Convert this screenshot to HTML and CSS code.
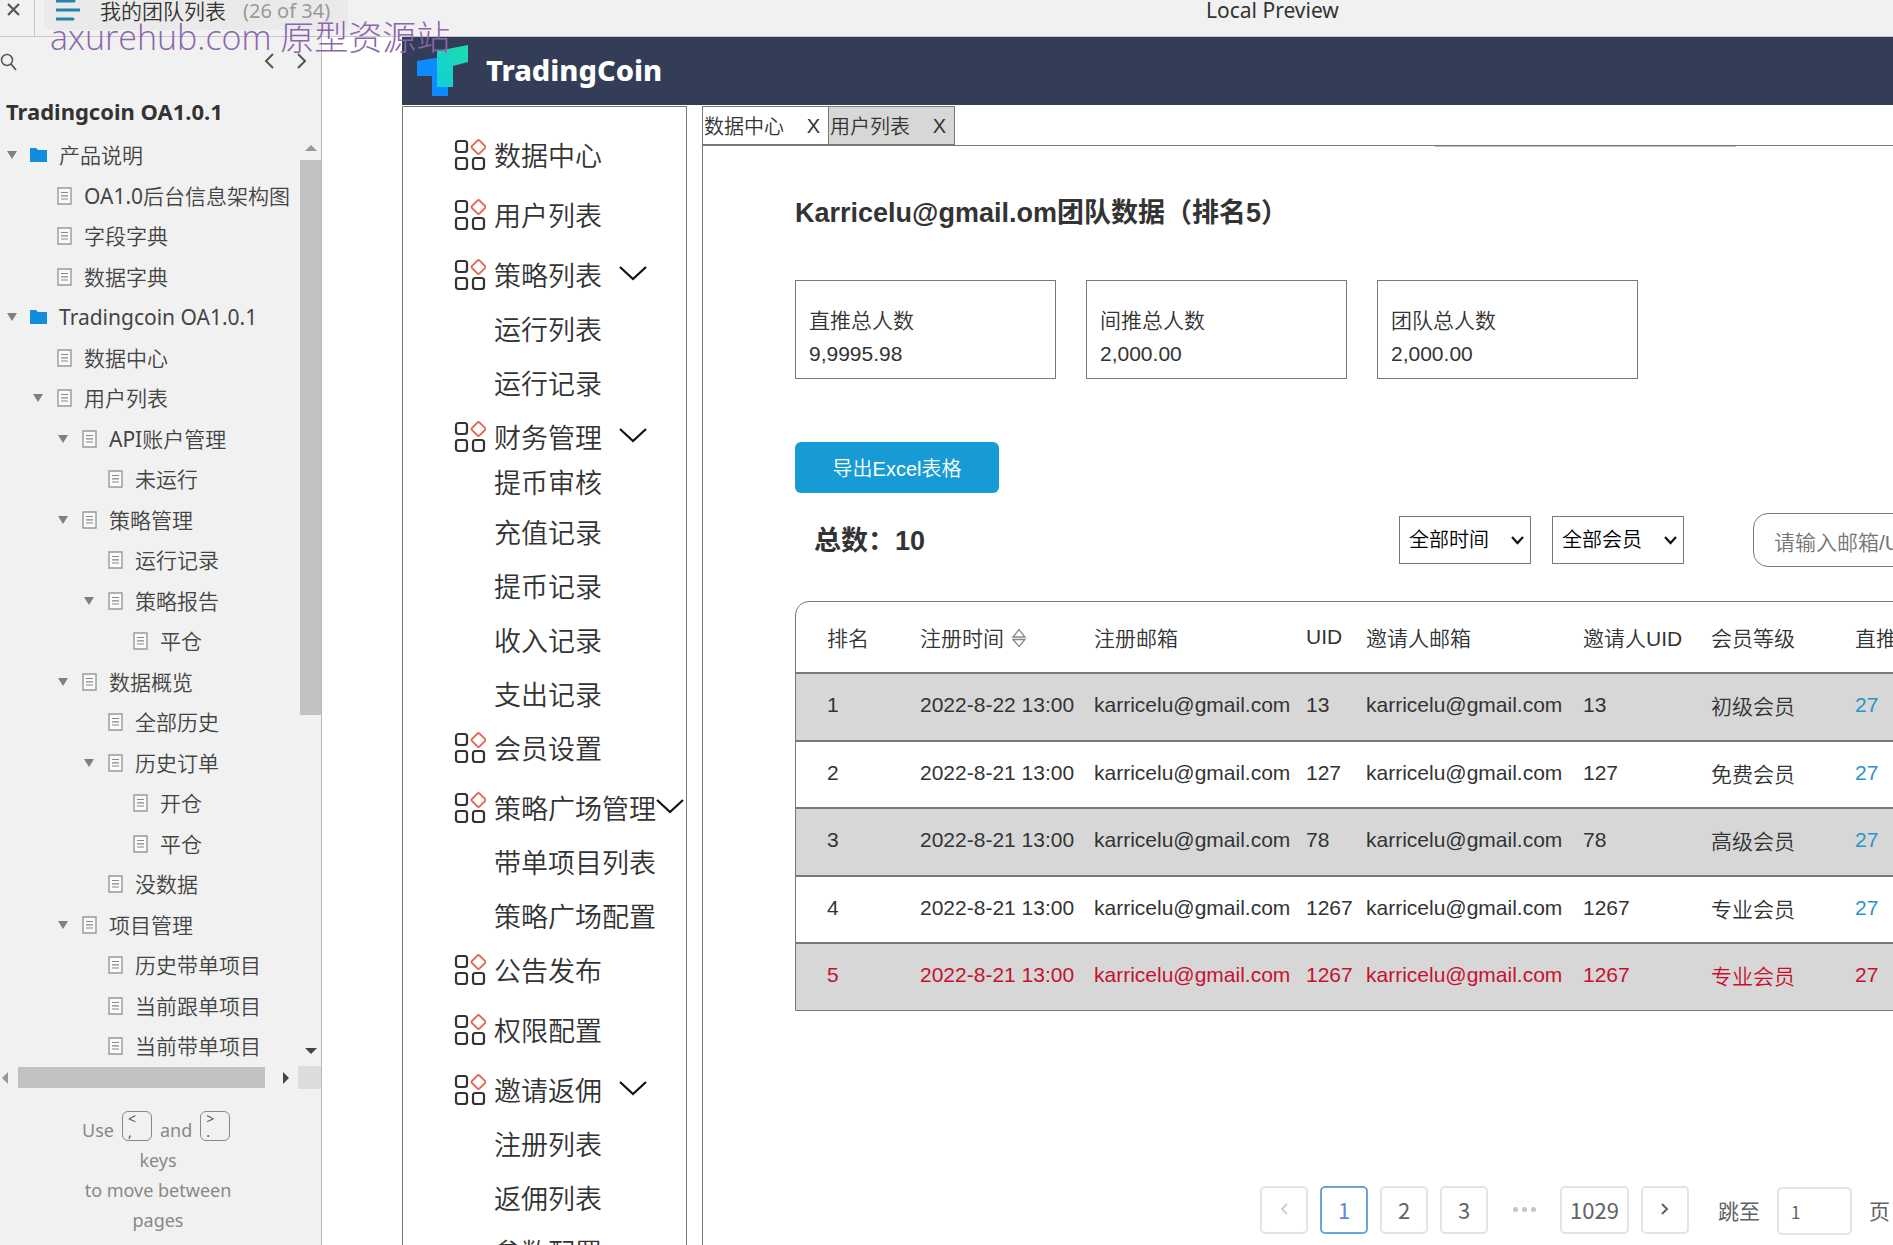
FILE: index.html
```html
<!DOCTYPE html>
<html lang="zh-CN">
<head>
<meta charset="utf-8">
<title>我的团队列表</title>
<link rel="stylesheet" href="styles.css">
</head>
<body>
<svg class="defs" width="0" height="0" aria-hidden="true">
  <symbol id="folder" viewBox="0 0 18 16"><path d="M0 1h6l2 2h9v12H0z" fill="#128cdc"/></symbol>
  <symbol id="doc" viewBox="0 0 15 18"><path d="M1 1h13v16H1z" fill="#fafafa" stroke="#999" stroke-width="1.4"/><path d="M4 5.5h7M4 8.8h7M4 12h7" stroke="#888" stroke-width="1.2"/></symbol>
  <symbol id="caret" viewBox="0 0 10 8"><path d="M0 0h10L5 8z" fill="#808080"/></symbol>
  <symbol id="apps" viewBox="0 0 32 32"><g fill="none" stroke="#333" stroke-width="2.2"><rect x="2" y="3" width="11" height="11" rx="2.5"/><rect x="2" y="20" width="11" height="11" rx="2.5"/><rect x="19" y="20" width="11" height="11" rx="2.5"/></g><rect x="19.200" y="3.700" width="10.600" height="10.600" rx="1.500" transform="rotate(45 24.500 9)" fill="none" stroke="#e2664f" stroke-width="1.900"/></symbol>
  <symbol id="chev" viewBox="0 0 28 16"><path d="M1 2l13 12L27 2" fill="none" stroke="#111" stroke-width="2.2"/></symbol>
</svg>

<header class="topbar">
  <button class="close" aria-label="Close"><svg width="13" height="13" viewBox="0 0 13 13"><path d="M1 1l11 11M12 1L1 12" stroke="#555" stroke-width="2.2"/></svg></button>
  <div class="page-title">
    <svg width="24" height="24" viewBox="0 0 24 24"><path d="M1 3h17M1 12h22M1 21h16" stroke="#2383a8" stroke-width="3" stroke-linecap="round"/></svg>
    <span class="page-name">我的团队列表</span>
    <span class="page-count">(26 of 34)</span>
  </div>
  <span class="preview">Local Preview</span>
</header>
<div class="watermark">axurehub.com 原型资源站</div>

<div class="workspace">
  <aside class="sidebar">
    <div class="tools">
      <button aria-label="Search"><svg width="17" height="18" viewBox="0 0 17 18"><circle cx="7" cy="7" r="5.500" fill="none" stroke="#555" stroke-width="1.500"/><path d="M11 11l5 6" stroke="#555" stroke-width="1.800"/></svg></button>
      <button class="step" aria-label="Previous"><svg width="10" height="16" viewBox="0 0 10 16"><path d="M9 1L2 8l7 7" fill="none" stroke="#555" stroke-width="2"/></svg></button>
      <button class="step" aria-label="Next"><svg width="10" height="16" viewBox="0 0 10 16"><path d="M1 1l7 7-7 7" fill="none" stroke="#555" stroke-width="2"/></svg></button>
    </div>
    <h2 class="project">Tradingcoin OA1.0.1</h2>
    <div class="tree-pane">
      <ul class="tree">
        <li class="l0 open"><svg class="caret"><use href="#caret"/></svg><svg class="folder"><use href="#folder"/></svg><a href="#">产品说明</a></li>
        <li class="l1"><svg class="doc"><use href="#doc"/></svg><a href="#"><span class="latin">OA1.0</span>后台信息架构图</a></li>
        <li class="l1"><svg class="doc"><use href="#doc"/></svg><a href="#">字段字典</a></li>
        <li class="l1"><svg class="doc"><use href="#doc"/></svg><a href="#">数据字典</a></li>
        <li class="l0 open"><svg class="caret"><use href="#caret"/></svg><svg class="folder"><use href="#folder"/></svg><a href="#" class="latin">Tradingcoin OA1.0.1</a></li>
        <li class="l1"><svg class="doc"><use href="#doc"/></svg><a href="#">数据中心</a></li>
        <li class="l1 open"><svg class="caret"><use href="#caret"/></svg><svg class="doc"><use href="#doc"/></svg><a href="#">用户列表</a></li>
        <li class="l2 open"><svg class="caret"><use href="#caret"/></svg><svg class="doc"><use href="#doc"/></svg><a href="#"><span class="latin">API</span>账户管理</a></li>
        <li class="l3"><svg class="doc"><use href="#doc"/></svg><a href="#">未运行</a></li>
        <li class="l2 open"><svg class="caret"><use href="#caret"/></svg><svg class="doc"><use href="#doc"/></svg><a href="#">策略管理</a></li>
        <li class="l3"><svg class="doc"><use href="#doc"/></svg><a href="#">运行记录</a></li>
        <li class="l3 open"><svg class="caret"><use href="#caret"/></svg><svg class="doc"><use href="#doc"/></svg><a href="#">策略报告</a></li>
        <li class="l4"><svg class="doc"><use href="#doc"/></svg><a href="#">平仓</a></li>
        <li class="l2 open"><svg class="caret"><use href="#caret"/></svg><svg class="doc"><use href="#doc"/></svg><a href="#">数据概览</a></li>
        <li class="l3"><svg class="doc"><use href="#doc"/></svg><a href="#">全部历史</a></li>
        <li class="l3 open"><svg class="caret"><use href="#caret"/></svg><svg class="doc"><use href="#doc"/></svg><a href="#">历史订单</a></li>
        <li class="l4"><svg class="doc"><use href="#doc"/></svg><a href="#">开仓</a></li>
        <li class="l4"><svg class="doc"><use href="#doc"/></svg><a href="#">平仓</a></li>
        <li class="l3"><svg class="doc"><use href="#doc"/></svg><a href="#">没数据</a></li>
        <li class="l2 open"><svg class="caret"><use href="#caret"/></svg><svg class="doc"><use href="#doc"/></svg><a href="#">项目管理</a></li>
        <li class="l3"><svg class="doc"><use href="#doc"/></svg><a href="#">历史带单项目</a></li>
        <li class="l3"><svg class="doc"><use href="#doc"/></svg><a href="#">当前跟单项目</a></li>
        <li class="l3"><svg class="doc"><use href="#doc"/></svg><a href="#">当前带单项目</a></li>
      </ul>
      <div class="vbar">
        <svg width="12" height="6" viewBox="0 0 12 6"><path d="M0 6h12L6 0z" fill="#999"/></svg>
        <div class="vthumb"></div>
        <svg width="12" height="6" viewBox="0 0 12 6"><path d="M0 0h12L6 6z" fill="#444"/></svg>
      </div>
      <div class="hbar">
        <svg width="6" height="12" viewBox="0 0 6 12"><path d="M6 0v12L0 6z" fill="#999"/></svg>
        <div class="hthumb"></div>
        <svg width="6" height="12" viewBox="0 0 6 12"><path d="M0 0v12l6-6z" fill="#444"/></svg>
      </div>
      <div class="corner"></div>
    </div>
    <div class="hint">
      <div class="hint-keys">Use <kbd><span>&lt;</span><span>,</span></kbd> and <kbd><span>&gt;</span><span>.</span></kbd></div>
      <div>keys</div>
      <div>to move between</div>
      <div>pages</div>
    </div>
  </aside>

  <main class="stage">
    <div class="brand">
      <svg width="52" height="52" viewBox="0 0 52 52">
        <defs><linearGradient id="g" x1="0" y1="1" x2="1" y2="0"><stop offset="0" stop-color="#0fd0d8"/><stop offset="1" stop-color="#20dcab"/></linearGradient></defs>
        <path d="M0 16l31-5v40H15V31H0z" fill="#0d8bff"/>
        <path d="M20 6l31-6v17l-15 4v21H20z" fill="url(#g)"/>
      </svg>
      <span>TradingCoin</span>
    </div>
    <div class="columns">
      <nav class="menu">
        <ul>
          <li class="leaf"><svg class="apps"><use href="#apps"/></svg><a href="#">数据中心</a></li>
          <li class="leaf"><svg class="apps"><use href="#apps"/></svg><a href="#">用户列表</a></li>
          <li><svg class="apps"><use href="#apps"/></svg><a href="#">策略列表</a><svg class="chev"><use href="#chev"/></svg></li>
          <li class="sub"><a href="#">运行列表</a></li>
          <li class="sub"><a href="#">运行记录</a></li>
          <li><svg class="apps"><use href="#apps"/></svg><a href="#">财务管理</a><svg class="chev"><use href="#chev"/></svg></li>
          <li class="sub tight"><a href="#">提币审核</a></li>
          <li class="sub"><a href="#">充值记录</a></li>
          <li class="sub"><a href="#">提币记录</a></li>
          <li class="sub"><a href="#">收入记录</a></li>
          <li class="sub"><a href="#">支出记录</a></li>
          <li class="leaf"><svg class="apps"><use href="#apps"/></svg><a href="#">会员设置</a></li>
          <li class="long"><svg class="apps"><use href="#apps"/></svg><a href="#">策略广场管理</a><svg class="chev"><use href="#chev"/></svg></li>
          <li class="sub"><a href="#">带单项目列表</a></li>
          <li class="sub"><a href="#">策略广场配置</a></li>
          <li class="leaf"><svg class="apps"><use href="#apps"/></svg><a href="#">公告发布</a></li>
          <li class="leaf"><svg class="apps"><use href="#apps"/></svg><a href="#">权限配置</a></li>
          <li><svg class="apps"><use href="#apps"/></svg><a href="#">邀请返佣</a><svg class="chev"><use href="#chev"/></svg></li>
          <li class="sub"><a href="#">注册列表</a></li>
          <li class="sub"><a href="#">返佣列表</a></li>
          <li class="sub"><a href="#">参数配置</a></li>
        </ul>
      </nav>

      <section class="panel">
        <div class="tabs">
          <div class="tab"><a href="#">数据中心</a><button aria-label="关闭数据中心">X</button></div>
          <div class="tab current"><a href="#">用户列表</a><button aria-label="关闭用户列表">X</button></div>
        </div>
        <div class="rule"></div>
        <div class="content">
          <h1>Karricelu@gmail.om团队数据（排名5）</h1>
          <div class="cards">
            <div class="card"><div>直推总人数</div><div>9,9995.98</div></div>
            <div class="card"><div>间推总人数</div><div>2,000.00</div></div>
            <div class="card"><div>团队总人数</div><div>2,000.00</div></div>
          </div>
          <button class="export">导出Excel表格</button>
          <div class="filters">
            <div class="total">总数：10</div>
            <div class="select"><select aria-label="时间"><option>全部时间</option></select><svg width="13" height="9" viewBox="0 0 13 9"><path d="M1 1l5.500 6L12 1" fill="none" stroke="#111" stroke-width="2.2"/></svg></div>
            <div class="select"><select aria-label="会员"><option>全部会员</option></select><svg width="13" height="9" viewBox="0 0 13 9"><path d="M1 1l5.500 6L12 1" fill="none" stroke="#111" stroke-width="2.2"/></svg></div>
            <input class="search" type="text" placeholder="请输入邮箱/UID" aria-label="搜索">
          </div>
          <table class="team">
            <colgroup><col class="c-rank"><col class="c-time"><col class="c-mail"><col class="c-uid"><col class="c-inviter"><col class="c-iuid"><col class="c-level"><col></colgroup>
            <thead>
              <tr><th>排名</th><th>注册时间<svg class="sort" width="16" height="20" viewBox="0 0 16 20"><path d="M2 9l6-7.500L14 9zM2 11.500l6 7L14 11.500z" fill="none" stroke="#888" stroke-width="1.300"/></svg></th><th>注册邮箱</th><th>UID</th><th>邀请人邮箱</th><th>邀请人UID</th><th>会员等级</th><th>直推人数</th></tr>
            </thead>
            <tbody>
              <tr><td>1</td><td>2022-8-22 13:00</td><td>karricelu@gmail.com</td><td>13</td><td>karricelu@gmail.com</td><td>13</td><td>初级会员</td><td><a href="#">27</a></td></tr>
              <tr><td>2</td><td>2022-8-21 13:00</td><td>karricelu@gmail.com</td><td>127</td><td>karricelu@gmail.com</td><td>127</td><td>免费会员</td><td><a href="#">27</a></td></tr>
              <tr><td>3</td><td>2022-8-21 13:00</td><td>karricelu@gmail.com</td><td>78</td><td>karricelu@gmail.com</td><td>78</td><td>高级会员</td><td><a href="#">27</a></td></tr>
              <tr><td>4</td><td>2022-8-21 13:00</td><td>karricelu@gmail.com</td><td>1267</td><td>karricelu@gmail.com</td><td>1267</td><td>专业会员</td><td><a href="#">27</a></td></tr>
              <tr class="alert"><td>5</td><td>2022-8-21 13:00</td><td>karricelu@gmail.com</td><td>1267</td><td>karricelu@gmail.com</td><td>1267</td><td>专业会员</td><td><a href="#">27</a></td></tr>
            </tbody>
          </table>
          <div class="pager">
            <button aria-label="上一页"><svg width="8" height="12" viewBox="0 0 8 12"><path d="M7 1L2 6l5 5" fill="none" stroke="#c0c4cc" stroke-width="1.600"/></svg></button>
            <button class="on">1</button>
            <button>2</button>
            <button>3</button>
            <span class="dots"><i></i><i></i><i></i></span>
            <button class="last">1029</button>
            <button aria-label="下一页"><svg width="8" height="12" viewBox="0 0 8 12"><path d="M1 1l5 5-5 5" fill="none" stroke="#606266" stroke-width="2"/></svg></button>
            <label for="jump">跳至</label>
            <input id="jump" type="text" value="1">
            <span>页</span>
          </div>
        </div>
      </section>
    </div>
  </main>
</div>
</body>
</html>
```
FILE: styles.css
```css
* { box-sizing: border-box; }

body {
  margin: 0;
  height: 100vh;
  display: flex;
  flex-direction: column;
  overflow: hidden;
  background: #fff;
  color: #333;
  font-family: "Liberation Sans", "Noto Sans CJK SC", sans-serif;
  font-size: 21px;
  font-weight: 350;
}

ul { margin: 0; padding: 0; list-style: none; }
a { color: inherit; text-decoration: none; }
svg { flex: none; display: block; }
button { padding: 0; border: 0; background: none; color: inherit; font: inherit; }
.defs { position: absolute; }
.latin { font-weight: 400; }

/* player bar */
.topbar {
  flex: none;
  position: relative;
  display: flex;
  height: 37px;
  background: #f1f1f1;
  border-bottom: 1px solid #c8c8c8;
  font-family: "Noto Sans", "Noto Sans CJK SC", sans-serif;
  line-height: 20px;
}
.close {
  width: 35px;
  border-right: 1px solid #c8c8c8;
  padding: 3px 0 0 7px;
  display: flex;
}
.page-title {
  display: flex;
  width: 304px;
  height: 30px;
  margin-left: 9px;
  padding-left: 12px;
  border-radius: 0 0 5px 5px;
  background: #eaeaea;
}
.page-title svg { margin-top: -2px; }
.page-name { margin-left: 20px; line-height: 22px; }
.page-count { margin-left: 17px; color: #999; font-size: 20px; font-weight: 400; line-height: 22px; }
.preview { position: absolute; left: 1206px; top: 0; font-size: 21px; font-weight: 400; }
.watermark {
  position: absolute;
  left: 50px;
  top: 18px;
  z-index: 2;
  color: #8c66ad;
  font: 300 34px/38px "Open Sans", "Noto Sans CJK SC", sans-serif;
  white-space: nowrap;
}

.workspace { flex: 1; display: flex; min-height: 0; }

/* page tree */
.sidebar {
  flex: none;
  width: 322px;
  border-right: 1px solid #bbb;
  background: #f1f1f1;
  font-family: "Noto Sans", "Noto Sans CJK SC", sans-serif;
  color: #444;
}
.tools { display: flex; height: 50px; padding: 16px 14px 0 0; align-items: flex-start; gap: 23px; }
.tools button:first-child { margin-right: auto; }
.project { margin: 0 0 10px 6px; color: #333; font-size: 22px; font-weight: 700; line-height: 48px; height: 38px; }
.tree-pane { display: grid; grid-template-columns: 1fr 23px; grid-template-rows: auto 23px; }
.tree { min-width: 0; overflow: hidden; }
.tree li { display: flex; align-items: center; height: 40px; padding-left: 30px; white-space: nowrap; line-height: 30px; }
.tree li:nth-child(even) { height: 41px; }
.tree .l1 { padding-left: 57px; }
.tree .l2 { padding-left: 82px; }
.tree .l3 { padding-left: 108px; }
.tree .l4 { padding-left: 133px; }
.caret { width: 10px; height: 8px; margin: 0 14px 0 -24px; }
.l0 .caret { margin: 0 13px 0 -23px; }
.doc { width: 15px; height: 18px; margin-right: 12px; }
.folder { width: 18px; height: 16px; margin-right: 11px; }
.vbar { display: flex; flex-direction: column; align-items: center; padding: 10px 0 12px 2px; gap: 9px; }
.vthumb { width: 100%; height: 555px; margin-bottom: auto; background: #c1c1c1; }
.hbar { display: flex; align-items: center; padding: 0 9px 0 2px; gap: 10px; }
.hthumb { width: 247px; height: 21px; margin-right: auto; background: #c1c1c1; }
.corner { background: #dcdcdc; }
.hint { width: 152px; margin: 16px auto 0 82px; color: #888; font-size: 18px; font-weight: 400; line-height: 30px; text-align: center; white-space: nowrap; }
.hint-keys { display: flex; gap: 8px; height: 40px; line-height: 50px; }
kbd {
  display: flex;
  flex-direction: column;
  flex: none;
  width: 30px;
  height: 30px;
  margin-top: 6px;
  padding: 0 5px;
  border: 1px solid #888;
  border-radius: 6px;
  color: #555;
  font: 14px/13px "Noto Sans", sans-serif;
  text-align: left;
}

/* prototype */
.stage { flex: 1; min-width: 0; display: flex; flex-direction: column; padding-left: 80px; overflow: hidden; }
.brand {
  flex: none;
  display: flex;
  align-items: center;
  gap: 17px;
  height: 68px;
  padding-left: 15px;
  background: #333d57;
  color: #fff;
  font: 800 29px/40px "Noto Sans", sans-serif;
}
.brand span { padding-bottom: 2px; }
.columns { flex: 1; display: flex; gap: 15px; min-height: 0; padding-top: 1px; }
.menu {
  flex: none;
  width: 285px;
  padding-top: 20px;
  border: 1px solid #797979;
  border-bottom: 0;
  font-size: 27px;
}
.menu li { display: flex; align-items: center; height: 54px; padding-left: 49px; white-space: nowrap; }
.menu .leaf { margin-bottom: 6px; }
.menu .sub { padding-left: 91px; }
.menu .tight { height: 36px; margin-bottom: 5px; }
.apps { width: 32px; height: 32px; margin: 0 8px 0 2px; }
.chev { width: 28px; height: 16px; margin: -3px 0 0 17px; }
.long .chev { margin-left: 0; }

.panel { flex: 1; min-width: 0; border-left: 1px solid #797979; }
.tabs { display: flex; height: 40px; border-bottom: 1px solid #797979; font-size: 20px; line-height: 38px; }
.tab { display: flex; justify-content: space-between; width: 126px; padding: 0 8px 0 1px; border: solid #797979; border-width: 1px 1px 1px 0; }
.tab a { padding-top: 1px; }
.tab button { padding-bottom: 2px; }
.tab.current { background: #d7d7d7; }
.rule { width: 301px; height: 1px; margin-left: 732px; background: #bbb; }

.content { padding: 49px 0 0 92px; }
h1 { margin: 0; font-size: 27px; line-height: 34px; white-space: nowrap; }
.cards { display: flex; gap: 30px; margin-top: 50px; }
.card { flex: none; width: 261px; height: 99px; padding: 23px 13px 0; border: 1px solid #797979; line-height: 33px; }
.export { display: block; width: 204px; height: 51px; margin-top: 63px; border-radius: 6px; background: #169bd5; color: #fff; font-size: 20px; }
.filters { display: flex; align-items: center; height: 54px; margin-top: 20px; }
.total { flex: none; width: 604px; padding: 0 0 4px 19px; font-size: 27px; font-weight: 700; }
.select { flex: none; position: relative; margin-right: 21px; }
.select select { appearance: none; width: 132px; height: 48px; padding: 0 0 0 9px; border: 1px solid #797979; border-radius: 0; background: #fff; color: #000; font: inherit; font-size: 20px; }
.select svg { position: absolute; right: 7px; top: 20px; pointer-events: none; }
.search { flex: none; width: 300px; height: 54px; margin-left: 48px; padding: 5px 20px 0; border: 1px solid #797979; border-radius: 15px; font: inherit; }
.search::placeholder { color: #757575; }

.team { width: 1400px; margin-top: 34px; table-layout: fixed; border-spacing: 0; border: 1px solid #797979; border-radius: 14px 0 0 0; }
.c-rank { width: 124px; }
.c-time { width: 174px; }
.c-mail { width: 212px; }
.c-uid { width: 60px; }
.c-inviter { width: 217px; }
.c-iuid { width: 128px; }
.c-level { width: 144px; }
th, td { height: 67px; padding: 0; border-bottom: 2px solid #797979; font-weight: inherit; text-align: left; white-space: nowrap; }
th { height: 72px; }
td { padding-bottom: 4px; }
th:first-child, td:first-child { padding-left: 31px; }
tbody tr:nth-child(odd) { background: #d7d7d7; }
tbody tr:nth-child(odd) td { height: 68px; }
tbody tr:last-child td { height: 66px; border-bottom: 0; }
td a { color: #2a94c8; }
.alert, .alert a { color: #c8102e; }
.sort { display: inline-block; margin-left: 7px; vertical-align: -2px; }

.pager {
  display: flex;
  align-items: center;
  gap: 12px;
  margin: 173px 0 0 465px;
  color: #606266;
  font: 22px/30px "Noto Sans CJK SC", sans-serif;
  white-space: nowrap;
}
.pager > * { flex: none; }
.pager button { display: flex; align-items: center; justify-content: center; width: 48px; height: 48px; padding-bottom: 2px; border: 2px solid #e2e4e8; border-radius: 5px; }
.pager .on { border-color: #6aa5d8; color: #6488d8; }
.pager .last { width: 69px; }
.dots { display: flex; justify-content: center; gap: 4px; width: 48px; }
.dots i { width: 5px; height: 5px; border-radius: 50%; background: #c0c4cc; }
.pager label { margin-left: 17px; font-size: 21px; }
.pager input { width: 75px; height: 48px; margin: 3px 5px 0; padding: 0 12px; border: 2px solid #e2e4e8; border-radius: 5px; color: inherit; font: inherit; font-size: 17px; }
.pager span { font-size: 21px; }
```
